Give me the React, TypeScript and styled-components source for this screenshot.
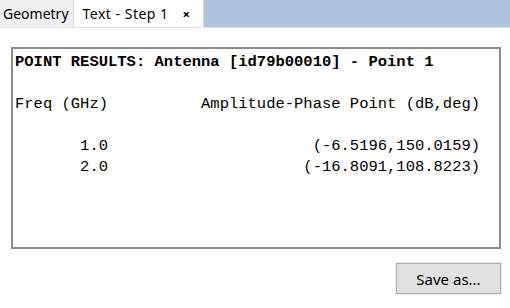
import React from 'react'
import styled, { createGlobalStyle } from 'styled-components'

const Global = createGlobalStyle`
    html, body {
        margin: 0;
        padding: 0;
        background: #ffffff;
    }
`

const Page = styled.div`
    width: 510px;
    height: 308px;
    display: flex;
    flex-direction: column;
    background: #ffffff;
    font-family: "Segoe UI", "Noto Sans", "Liberation Sans", sans-serif;
    overflow: hidden;
`

const TabBar = styled.div`
    display: flex;
    height: 27px;
    background: #b0c4de;
    border-bottom: 1px solid #e3e3e3;
`

const Tab = styled.div<{ active?: boolean }>`
    display: flex;
    align-items: center;
    gap: 14px;
    height: 100%;
    box-sizing: border-box;
    padding: ${p => (p.active ? '0 12px 0 9px' : '0 4px 0 3px')};
    background: ${p => (p.active ? '#ffffff' : '#f0f0f0')};
    border-right: 1px solid ${p => (p.active ? '#d8d8d8' : '#dadada')};
    font-size: 14px;
    letter-spacing: ${p => (p.active ? '0.5px' : '0')};
    color: #000;
`

const Close = styled.span`
    font-size: 13px;
    font-weight: bold;
`

const Body = styled.div`
    flex: 1;
    display: flex;
    flex-direction: column;
    padding: 19px 9px 0 11px;
`

const Output = styled.pre`
    margin: 0;
    width: 490px;
    height: 202px;
    box-sizing: border-box;
    border: 2px solid #8a8a8e;
    padding: 3px 2px;
    font-family: "Liberation Mono", "Courier New", monospace;
    font-size: 15.5px;
    line-height: 21px;
    color: #000;
    background: #ffffff;
`

const Heading = styled.span`
    font-weight: bold;
`

const Footer = styled.div`
    display: flex;
    justify-content: flex-end;
    padding: 14px 0 0 0;
`

const Button = styled.button`
    width: 105px;
    height: 31px;
    box-sizing: border-box;
    border: 1px solid #adadad;
    outline: 1px solid #ececec;
    background: #e1e1e1;
    font-family: "Segoe UI", "Noto Sans", "Liberation Sans", sans-serif;
    font-size: 15px;
    color: #000;
    padding: 0;
`

export default function App() {
    const rows = [
        { freq: '1.0', value: '(-6.5196,150.0159)' },
        { freq: '2.0', value: '(-16.8091,108.8223)' },
    ]

    const lines = rows.map(r => r.freq.padStart(10) + r.value.padStart(40)).join('\n')

    return (
        <Page>
            <Global />
            <TabBar>
                <Tab>Geometry</Tab>
                <Tab active>
                    Text - Step 1
                    <Close>×</Close>
                </Tab>
            </TabBar>
            <Body>
                <Output>
                    <Heading>POINT RESULTS: Antenna [id79b00010] - Point 1</Heading>
                    {'\n\n'}
                    {'Freq (GHz)'.padEnd(20) + 'Amplitude-Phase Point (dB,deg)'}
                    {'\n\n'}
                    {lines}
                </Output>
                <Footer>
                    <Button>Save as...</Button>
                </Footer>
            </Body>
        </Page>
    )
}
